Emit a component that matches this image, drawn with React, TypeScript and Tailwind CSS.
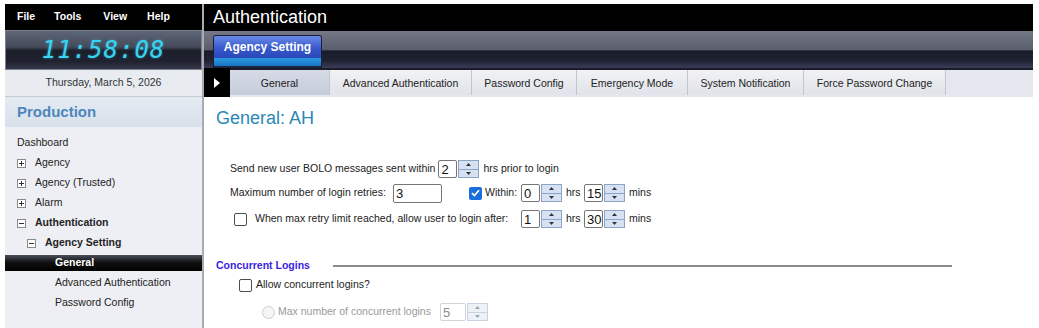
import type { ReactNode } from "react";

const font = { fontFamily: '"Liberation Sans", Arial, sans-serif' };

function Expander({ open }: { open: boolean }) {
  return (
    <span className="relative inline-block h-[9px] w-[9px] border border-[#8a8a8a] bg-white">
      <span className="absolute left-[1px] top-[3px] h-[1px] w-[5px] bg-[#333]" />
      {!open && <span className="absolute left-[3px] top-[1px] h-[5px] w-[1px] bg-[#333]" />}
    </span>
  );
}

function TreeRow({ indent, children, bold, box }: { indent: number; children: ReactNode; bold?: boolean; box?: "open" | "closed" }) {
  return (
    <div className="flex h-[20px] items-center text-[10.5px] text-[#222]" style={{ paddingLeft: indent }}>
      {box && (
        <span className="mr-[9px] flex items-center">
          <Expander open={box === "open"} />
        </span>
      )}
      <span className={bold ? "font-bold" : ""}>{children}</span>
    </div>
  );
}

function Spinner({ disabled }: { disabled?: boolean }) {
  return (
    <div
      className={`ml-[1px] flex h-[18px] w-[21px] shrink-0 flex-col border ${
        disabled ? "border-[#c9d3e0] bg-[#eef2f8]" : "border-[#8ea4c4] bg-[#d6e2f3]"
      }`}
    >
      <div className={`flex flex-1 items-center justify-center border-b ${disabled ? "border-[#c9d3e0]" : "border-[#8ea4c4]"}`}>
        <svg width="5" height="3" viewBox="0 0 5 3">
          <path d="M0 3 L2.5 0 L5 3 Z" fill={disabled ? "#9aa" : "#333"} />
        </svg>
      </div>
      <div className="flex flex-1 items-center justify-center">
        <svg width="5" height="3" viewBox="0 0 5 3">
          <path d="M0 0 L2.5 3 L5 0 Z" fill={disabled ? "#9aa" : "#333"} />
        </svg>
      </div>
    </div>
  );
}

function NumInput({ value, w, h = 18, disabled }: { value: string; w: number; h?: number; disabled?: boolean }) {
  return (
    <div
      className={`flex shrink-0 items-center rounded-[2px] border pl-[2px] text-[13px] leading-none ${
        disabled ? "border-[#d4d4d4] text-[#8a8a8a]" : "border-[#767676] text-[#111]"
      }`}
      style={{ width: w, height: h }}
    >
      {value}
    </div>
  );
}

function CheckBox({ checked }: { checked?: boolean }) {
  if (checked)
    return (
      <span className="flex h-[13px] w-[13px] shrink-0 items-center justify-center rounded-[2px] bg-[#1a6fdc]">
        <svg width="9" height="8" viewBox="0 0 9 8">
          <path d="M1 4.2 L3.4 6.5 L8 1.2" stroke="white" strokeWidth="1.7" fill="none" />
        </svg>
      </span>
    );
  return <span className="block h-[13px] w-[13px] shrink-0 rounded-[2px] border border-[#4d4d4d] bg-white" />;
}

function TimeGroup({ hrs, mins }: { hrs: string; mins: string }) {
  return (
    <div className="flex items-center">
      <NumInput value={hrs} w={19} />
      <Spinner />
      <span className="ml-[4px] w-[18px]">hrs</span>
      <NumInput value={mins} w={19} />
      <Spinner />
      <span className="ml-[4px]">mins</span>
    </div>
  );
}

const subTabs = [
  { label: "General", w: 100 },
  { label: "Advanced Authentication", w: 142 },
  { label: "Password Config", w: 105 },
  { label: "Emergency Mode", w: 111 },
  { label: "System Notification", w: 116 },
  { label: "Force Password Change", w: 142 },
];

export default function App() {
  return (
    <div className="h-[328px] w-[1039px] overflow-hidden bg-white pl-[5px] pt-[4px]" style={font}>
      <div className="flex h-[324px] w-[1028px]">
        {/* sidebar */}
        <aside className="flex w-[197px] flex-col bg-[#eeeff4]">
          <div className="flex h-[26px] items-center bg-black text-[10.5px] font-bold text-white">
            <span className="ml-[12px]">File</span>
            <span className="ml-[19px]">Tools</span>
            <span className="ml-[22px]">View</span>
            <span className="ml-[20px]">Help</span>
          </div>
          <div className="flex h-[40px] items-center justify-center border border-[#7d808a] bg-[linear-gradient(to_bottom,#5f6677_0%,#444a5a_42%,#1c1e29_52%,#20222f_80%,#34374a_100%)]">
            <span
              className="text-[24px] italic leading-none tracking-[1px] text-[#38d4f4] [text-shadow:0_0_3px_rgba(56,212,244,0.5)]"
              style={{ fontFamily: '"DejaVu Sans Mono", monospace' }}
            >
              11:58:08
            </span>
          </div>
          <div className="flex h-[27px] items-center justify-center border-b border-[#c6cad2] bg-[#e8ecf1] text-[10.5px] text-[#333]">
            Thursday, March 5, 2026
          </div>
          <div className="flex h-[30px] items-center bg-[linear-gradient(to_bottom,#e3eaf2,#d8e1eb)] pl-[12px] text-[15px] font-bold text-[#4f86bb]">
            Production
          </div>
          <div className="pt-[6px]">
            <TreeRow indent={12}>Dashboard</TreeRow>
            <TreeRow indent={12} box="closed">Agency</TreeRow>
            <TreeRow indent={12} box="closed">Agency (Trusted)</TreeRow>
            <TreeRow indent={12} box="closed">Alarm</TreeRow>
            <TreeRow indent={12} box="open" bold>Authentication</TreeRow>
            <TreeRow indent={22} box="open" bold>Agency Setting</TreeRow>
            <div className="my-[2px] flex h-[16px] items-center bg-[linear-gradient(to_bottom,#4a4f5c,#111_45%,#000)] pl-[50px] text-[10.5px] font-bold text-white">
              General
            </div>
            <TreeRow indent={50}>Advanced Authentication</TreeRow>
            <TreeRow indent={50}>Password Config</TreeRow>
          </div>
        </aside>

        <div className="w-[2px] bg-[#a9abb2]" />

        {/* main */}
        <main className="flex flex-1 flex-col">
          <div className="flex h-[27px] items-center bg-black pl-[9px] text-[18px] text-white">Authentication</div>
          <div className="flex h-[37px] items-end bg-[linear-gradient(to_bottom,#737786_0%,#5b5f6d_50%,#1a1c28_54%,#1f2233_80%,#3a3d57_100%)] pl-[9px]">
            <div className="flex h-[33px] w-[109px] flex-col overflow-hidden rounded-t-[3px] border border-b-0 border-[#1b1d3a]">
              <div className="flex h-[22px] items-center justify-center bg-[linear-gradient(to_bottom,#6a8ae6,#3556cc_60%,#2a47b8)] text-[12px] font-bold text-white">
                Agency Setting
              </div>
              <div className="h-[8px] bg-[linear-gradient(to_bottom,#2a9ae0,#1a74c4)]" />
              <div className="flex-1 bg-[#1c2540]" />
            </div>
          </div>
          <div className="flex h-[29px] bg-[#1b1c28]">
            <div className="flex w-[26px] items-center justify-center bg-black">
              <svg width="6" height="10" viewBox="0 0 6 10">
                <path d="M0 0 L6 5 L0 10 Z" fill="white" />
              </svg>
            </div>
            <div className="mt-[2px] flex flex-1 bg-[#e4e7ee]">
              {subTabs.map((t, i) => (
                <div
                  key={t.label}
                  className={`flex h-[25px] items-center justify-center border-r border-[#c3c6cd] pt-[2px] text-[10.5px] text-[#222] ${
                    i === 0 ? "bg-[linear-gradient(to_bottom,#d6dbe6,#c5ccdb)]" : "bg-[linear-gradient(to_bottom,#f1f2f5,#e0e3e9)]"
                  }`}
                  style={{ width: t.w }}
                >
                  {t.label}
                </div>
              ))}
            </div>
          </div>

          {/* content */}
          <div className="flex-1 pl-[12px] pt-[11px] text-[10.5px] text-[#222]">
            <h1 className="text-[18px] leading-[21px] text-[#2a88b6]">General: AH</h1>

            <div className="ml-[14px] mt-[30px] flex h-[20px] items-center">
              <span>Send new user BOLO messages sent within</span>
              <span className="ml-[3px] flex items-center">
                <NumInput value="2" w={19} />
                <Spinner />
              </span>
              <span className="ml-[4px]">hrs prior to login</span>
            </div>

            <div className="ml-[14px] mt-[4px] flex h-[20px] items-center">
              <span className="w-[163px] shrink-0">Maximum number of login retries:</span>
              <NumInput value="3" w={49} h={19} />
              <span className="ml-[27px]">
                <CheckBox checked />
              </span>
              <span className="ml-[3px] w-[36px] shrink-0">Within:</span>
              <TimeGroup hrs="0" mins="15" />
            </div>

            <div className="ml-[14px] mt-[6px] flex h-[20px] items-center">
              <span className="ml-[4px]">
                <CheckBox />
              </span>
              <span className="ml-[8px] w-[266px] shrink-0">When max retry limit reached, allow user to login after:</span>
              <TimeGroup hrs="1" mins="30" />
            </div>

            <div className="mt-[30px] flex h-[14px] items-center">
              <span className="w-[117px] shrink-0 font-bold text-[#3a24e2]">Concurrent Logins</span>
              <div className="h-[2px] w-[619px] bg-[#8c8c8c]" />
            </div>

            <div className="ml-[23px] mt-[4px] flex h-[16px] items-center">
              <CheckBox />
              <span className="ml-[4px]">Allow concurrent logins?</span>
            </div>

            <div className="ml-[46px] mt-[10px] flex h-[18px] items-center text-[#9a9a9a]">
              <span className="h-[13px] w-[13px] shrink-0 rounded-full border border-[#cfcfcf] bg-[#f5f5f5]" />
              <span className="ml-[3px] w-[162px] shrink-0">Max number of concurrent logins</span>
              <NumInput value="5" w={26} disabled />
              <Spinner disabled />
            </div>
          </div>
        </main>
      </div>
    </div>
  );
}
